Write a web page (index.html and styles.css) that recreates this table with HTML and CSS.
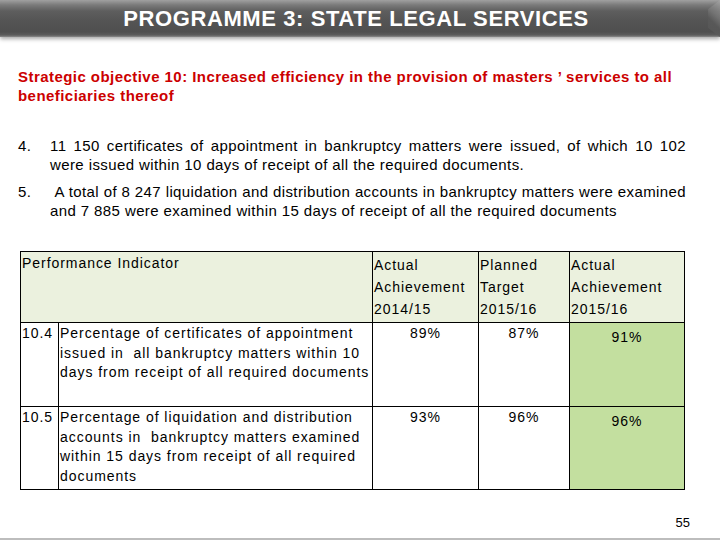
FILE: index.html
```html
<!DOCTYPE html>
<html>
<head>
<meta charset="utf-8">
<link rel="stylesheet" href="styles.css">
</head>
<body>
<div class="slide">
  <header class="title-bar">
    <h1 class="title">PROGRAMME 3: STATE LEGAL SERVICES</h1>
  </header>
  <section class="content">
    <p class="objective">Strategic objective 10: Increased efficiency in the provision of masters ’ services to all beneficiaries thereof</p>
    <ol class="points">
      <li class="point"><span class="num">4.</span><span class="txt">11 150 certificates of appointment in bankruptcy matters were issued, of which 10 102 were issued within 10 days of receipt of all the required documents.</span></li>
      <li class="point"><span class="num">5.</span><span class="txt">&nbsp;A total of 8 247 liquidation and distribution accounts in bankruptcy matters were examined and 7 885 were examined within 15 days of receipt of all the required documents</span></li>
    </ol>
    <table class="pi">
      <colgroup>
        <col class="c-num"><col class="c-desc"><col class="c-a1"><col class="c-pt"><col class="c-a2">
      </colgroup>
      <thead>
        <tr class="head">
          <th colspan="2" class="h-pi">Performance Indicator</th>
          <th class="h-col">Actual<br>Achievement<br>2014/15</th>
          <th class="h-col">Planned<br>Target<br>2015/16</th>
          <th class="h-col">Actual<br>Achievement<br>2015/16</th>
        </tr>
      </thead>
      <tbody>
        <tr class="row r1">
          <td class="id">10.4</td>
          <td class="desc">Percentage of certificates of appointment issued in &nbsp;all bankruptcy matters within 10 days from receipt of all required documents</td>
          <td class="val">89%</td>
          <td class="val">87%</td>
          <td class="val hit">91%</td>
        </tr>
        <tr class="row r2">
          <td class="id">10.5</td>
          <td class="desc">Percentage of liquidation and distribution accounts in &nbsp;bankruptcy matters examined within 15 days from receipt of all required documents</td>
          <td class="val">93%</td>
          <td class="val">96%</td>
          <td class="val hit">96%</td>
        </tr>
      </tbody>
    </table>
  </section>
  <footer class="page-no">55</footer>
</div>
</body>
</html>
```
FILE: styles.css
```css
html, body {
  margin: 0;
  padding: 0;
  background: #fff;
}
body {
  font-family: "Liberation Sans", Arial, sans-serif;
  color: #000;
}
.slide {
  width: 720px;
  height: 540px;
  position: relative;
  overflow: hidden;
  box-sizing: border-box;
  border-bottom: 2px solid #bdbdbd;
}
.title-bar {
  height: 37px;
  background: linear-gradient(#a0a0a0 0px, #7a7a7a 5px, #5e5e5e 11px, #555 20px, #4f4f4f 32px, #5c5c5c 35px, #8a8a8a 37px);
  box-shadow: 0 2px 4px rgba(0,0,0,0.35);
  display: flex;
  align-items: center;
  justify-content: center;
  position: relative;
}
.title-bar::after {
  content: "";
  position: absolute;
  right: 0;
  top: 0;
  width: 12px;
  height: 37px;
  background: linear-gradient(225deg, #a8a8a8 0, #7c7c7c 40%, #5a5a5a 60%);
  clip-path: polygon(100% 0, 100% 100%, 0 75%, 0 25%);
  opacity: 0.7;
}
.title {
  margin: 0;
  color: #fff;
  font-size: 22px;
  font-weight: bold;
  letter-spacing: 0.6px;
  padding-right: 8px;
  padding-top: 1px;
}
.content {
  padding: 30px 34px 0 18px;
}
.objective {
  margin: 0;
  color: #cc0000;
  font-size: 15px;
  font-weight: bold;
  line-height: 19px;
  letter-spacing: 0.45px;
}
.points {
  list-style: none;
  margin: 31px 0 0 0;
  padding: 0;
}
.point {
  display: flex;
  font-size: 15px;
  line-height: 19px;
  letter-spacing: 0.4px;
  margin-bottom: 8px;
}
.num {
  width: 32px;
  flex: none;
}
.txt {
  flex: 1;
  text-align: justify;
}
.pi {
  margin: 31px 0 0 2px;
  border-collapse: collapse;
  width: 664px;
  table-layout: fixed;
  font-size: 14px;
  letter-spacing: 0.95px;
}
.c-num { width: 38px; }
.c-desc { width: 314px; }
.c-a1 { width: 106px; }
.c-pt { width: 91px; }
.c-a2 { width: 115px; }
.pi th, .pi td {
  border: 1px solid #000;
  vertical-align: top;
  font-weight: normal;
  text-align: left;
}
.head th {
  background: #ebf1de;
  height: 71px;
  box-sizing: border-box;
  padding: 2px 1px;
  line-height: 22px;
}
.head .h-pi {
  line-height: 18px;
  padding-top: 2px;
}
.row td {
  line-height: 19.5px;
  padding: 1px 1px;
}
.r1 td { height: 84px; box-sizing: border-box; }
.r2 td { height: 83px; box-sizing: border-box; }
.val {
  text-align: center !important;
}
.hit {
  background: #c3df9f;
  padding-top: 5px !important;
}
.page-no {
  position: absolute;
  right: 30px;
  bottom: 8px;
  font-size: 13px;
}
```
